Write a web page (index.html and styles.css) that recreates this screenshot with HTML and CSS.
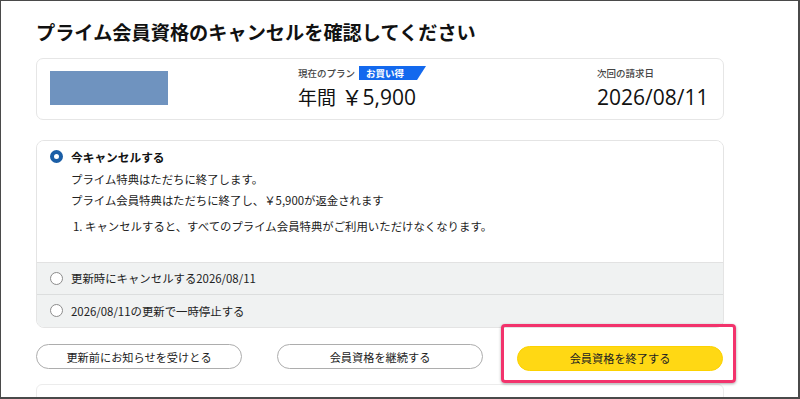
FILE: index.html
```html
<!DOCTYPE html>
<html lang="ja">
<head>
<meta charset="utf-8">
<link rel="stylesheet" href="styles.css">
</head>
<body>
<div class="frame">
  <h1 class="title">プライム会員資格のキャンセルを確認してください</h1>

  <div class="summary">
    <div class="logo-block"></div>
    <div class="col">
      <div class="label-row">
        <span class="label">現在のプラン</span>
        <span class="badge">お買い得</span>
      </div>
      <div class="big"><span class="cjk">年間</span> ￥5,900</div>
    </div>
    <div class="col">
      <div class="label-row">
        <span class="label">次回の請求日</span>
      </div>
      <div class="big">2026/08/11</div>
    </div>
  </div>

  <div class="options">
    <div class="opt-main">
      <div class="opt-row">
        <span class="radio checked"></span>
        <span class="opt-title">今キャンセルする</span>
      </div>
      <p class="line l1">プライム特典はただちに終了します。</p>
      <p class="line l2">プライム会員特典はただちに終了し、￥5,900が返金されます</p>
      <p class="line l3">1. キャンセルすると、すべてのプライム会員特典がご利用いただけなくなります。</p>
    </div>
    <div class="opt-alt">
      <span class="radio"></span>
      <span class="opt-text">更新時にキャンセルする2026/08/11</span>
    </div>
    <div class="opt-alt last">
      <span class="radio"></span>
      <span class="opt-text">2026/08/11の更新で一時停止する</span>
    </div>
  </div>

  <div class="buttons">
    <button class="btn">更新前にお知らせを受けとる</button>
    <button class="btn">会員資格を継続する</button>
    <div class="primary-wrap">
      <button class="btn primary">会員資格を終了する</button>
      <div class="highlight"></div>
    </div>
  </div>

  <div class="next-card"></div>
</div>
</body>
</html>
```

FILE: styles.css
```css
* { box-sizing: border-box; }
html, body { margin: 0; padding: 0; background: #fff; }
body {
  font-family: "Noto Sans CJK JP", "Noto Sans", sans-serif;
  color: #111;
}
.frame {
  width: 800px;
  height: 399px;
  overflow: hidden;
  border-style: solid;
  border-color: #4a4a4a;
  border-width: 1px 2px 2px 1px;
  padding: 18px 0 0 35px;
  background: #fff;
}
.title {
  margin: 0;
  font-size: 19.2px;
  line-height: 26px;
  font-weight: 700;
  color: #111;
}
.summary {
  margin-top: 13px;
  width: 688px;
  height: 62px;
  border: 1px solid #e6e6e6;
  border-radius: 7px;
  padding: 7px 13px;
  display: grid;
  grid-template-columns: 248px 299px 1fr;
  align-items: start;
}
.logo-block {
  margin-top: 5px;
  width: 118px;
  height: 34px;
  background: #6f93bf;
}
.col { display: flex; flex-direction: column; }
.label-row {
  display: flex;
  align-items: center;
  height: 14px;
  gap: 4px;
}
.label {
  font-size: 9.5px;
  color: #444;
  font-weight: 500;
}
.badge {
  height: 14px;
  width: 67px;
  background: #1369ee;
  color: #fff;
  font-size: 9.5px;
  font-weight: 700;
  line-height: 14px;
  padding-left: 7px;
  clip-path: polygon(0 0, 100% 0, calc(100% - 9px) 100%, 0 100%);
}
.big {
  margin-top: 6px;
  font-family: "Open Sans", "Noto Sans CJK JP", sans-serif;
  font-size: 21px;
  line-height: 22px;
  color: #111;
}
.big .cjk {
  font-family: "Noto Sans CJK JP", sans-serif;
  font-size: 19px;
}
.options {
  margin-top: 20px;
  width: 688px;
  border: 1px solid #e4e4e4;
  border-radius: 8px;
  overflow: hidden;
}
.opt-main {
  padding: 7px 13px 28px 13px;
  background: #fff;
  border-bottom: 1px solid #e2e2e2;
  height: 122px;
}
.opt-row {
  display: flex;
  align-items: center;
  height: 16px;
  gap: 8px;
}
.radio {
  flex: none;
  width: 13px;
  height: 13px;
  border-radius: 50%;
  border: 1px solid #8c8c8c;
  background: #fff;
}
.radio.checked {
  border: 4px solid #1b5ea6;
}
.opt-title {
  font-size: 11.7px;
  font-weight: 700;
  color: #111;
}
.line {
  margin: 0;
  padding-left: 21px;
  font-size: 11.4px;
  line-height: 16px;
  color: #222;
}
.l1 { margin-top: 7px; }
.l2 { margin-top: 5px; }
.l3 { margin-top: 10px; padding-left: 23px; }
.opt-alt {
  display: flex;
  align-items: center;
  gap: 8px;
  height: 32px;
  padding: 0 13px 1px;
  background: #f0f2f2;
  border-bottom: 1px solid #dcdede;
}
.opt-alt.last { border-bottom: none; }
.opt-text {
  font-size: 11.4px;
  color: #222;
}
.buttons {
  margin-top: 16px;
  width: 688px;
  display: flex;
  gap: 35px;
}
.btn {
  width: 206px;
  height: 25px;
  border-radius: 13px;
  border: 1px solid #adadad;
  background: #fff;
  font-family: "Noto Sans CJK JP", "Noto Sans", sans-serif;
  font-size: 11.2px;
  color: #222;
  padding: 0;
}
.primary-wrap {
  position: relative;
  margin-left: -1px;
}
.btn.primary {
  background: #ffd814;
  border-color: #fcd200;
  color: #222;
}
.highlight {
  position: absolute;
  left: -16px;
  top: -20px;
  right: -13px;
  bottom: -12px;
  border: 3px solid #f2336c;
  border-radius: 4px;
  box-shadow: 0 1px 3px rgba(0,0,0,0.35);
}
.next-card {
  margin-top: 13px;
  width: 688px;
  height: 40px;
  border: 1px solid #ececec;
  border-radius: 6px 6px 0 0;
}
```
